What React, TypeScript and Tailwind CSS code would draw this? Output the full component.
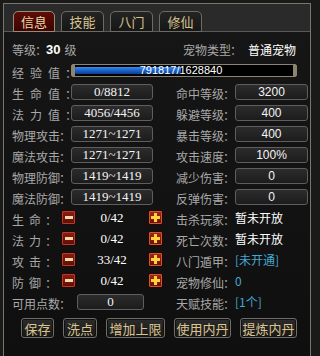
import React from 'react';

const CJK = "font-['Noto_Sans_CJK_SC','Noto_Sans',sans-serif]";

type Spread = 'none' | 'two' | 'three';

const leftRows: { label: string; spread: Spread; value: string }[] = [
  { label: '生命值', spread: 'three', value: '0/8812' },
  { label: '法力值', spread: 'three', value: '4056/4456' },
  { label: '物理攻击', spread: 'none', value: '1271~1271' },
  { label: '魔法攻击', spread: 'none', value: '1271~1271' },
  { label: '物理防御', spread: 'none', value: '1419~1419' },
  { label: '魔法防御', spread: 'none', value: '1419~1419' },
];

const points = [
  { label: '生命', value: '0/42' },
  { label: '法力', value: '0/42' },
  { label: '攻击', value: '33/42' },
  { label: '防御', value: '0/42' },
];

type RightRow = { label: string; value: string; kind: 'box' | 'white' | 'cyan' };

const rightRows: RightRow[] = [
  { label: '命中等级', value: '3200', kind: 'box' },
  { label: '躲避等级', value: '400', kind: 'box' },
  { label: '暴击等级', value: '400', kind: 'box' },
  { label: '攻击速度', value: '100%', kind: 'box' },
  { label: '减少伤害', value: '0', kind: 'box' },
  { label: '反弹伤害', value: '0', kind: 'box' },
  { label: '击杀玩家', value: '暂未开放', kind: 'white' },
  { label: '死亡次数', value: '暂未开放', kind: 'white' },
  { label: '八门遁甲', value: '[未开通]', kind: 'cyan' },
  { label: '宠物修仙', value: '0', kind: 'cyan' },
  { label: '天赋技能', value: '[1个]', kind: 'cyan' },
];

const tabs = ['信息', '技能', '八门', '修仙'];
const buttons = [
  { text: '保存', w: 'w-[33px]' },
  { text: '洗点', w: 'w-[34px]' },
  { text: '增加上限', w: 'w-[59px]' },
  { text: '使用内丹', w: 'w-[57px]' },
  { text: '提炼内丹', w: 'w-[57px]' },
];

function Label({ text, spread = 'none' }: { text: string; spread?: Spread }) {
  const gap = spread === 'three' ? 'gap-[6px]' : spread === 'two' ? 'gap-[5px]' : 'gap-0';
  return (
    <span className={`inline-flex items-center whitespace-nowrap ${gap} text-[12px] text-[#a8a8a8] leading-none`}>
      {text.split('').map((c, i) => (
        <span key={i}>{c}</span>
      ))}
      <span className="-ml-px">：</span>
    </span>
  );
}

function ValueBox({ value, serif, width }: { value: string; serif?: boolean; width: string }) {
  return (
    <div
      className={`${width} h-[16px] rounded-[3px] border border-[#5e5e5e] bg-gradient-to-b from-[#2c2c2c] to-[#1c1c1c] flex items-center justify-center text-[#f4f4f4] leading-none ${
        serif ? "font-['Liberation_Serif',serif] text-[13px]" : "font-['Liberation_Sans',sans-serif] text-[12px]"
      }`}
    >
      {value}
    </div>
  );
}

function MinusBtn() {
  return (
    <div className="w-[15px] h-[15px] rounded-[2px] border border-[#2a0504] bg-gradient-to-b from-[#8e1c14] to-[#5e0d08] flex items-center justify-center shadow-[inset_0_0_0_1px_#b0402c]">
      <div className="w-[8px] h-[3px] bg-[#f3d8a8]" />
    </div>
  );
}

function PlusBtn() {
  return (
    <div className="relative w-[15px] h-[15px] rounded-[2px] border border-[#2a0504] bg-gradient-to-b from-[#a8261a] to-[#6a1008] flex items-center justify-center shadow-[inset_0_0_0_1px_#c85a30]">
      <div className="absolute w-[9px] h-[3px] bg-[#ffd23a]" />
      <div className="absolute w-[3px] h-[9px] bg-[#ffd23a]" />
    </div>
  );
}

export default function App() {
  const expCur = 791817;
  const expMax = 1628840;
  const pct = (expCur / expMax) * 100;

  return (
    <div className={`w-[320px] h-[356px] bg-[#1a1a1a] pt-[3px] pl-[3px] pr-[9px] overflow-hidden ${CJK}`}>
      <div className="h-full border-t border-l border-r border-[#77776c] flex flex-col bg-gradient-to-b from-[#161616] to-[#0f0f0f]">
        {/* Tabs header */}
        <div className="h-[28px] bg-[#2a2a2a] border-b border-[#5a5a52] flex items-end pl-[9px] gap-[6px]">
          {tabs.map((t, i) => (
            <div
              key={t}
              className={`h-[21px] -mb-px rounded-t-[5px] border flex items-center justify-center text-[13px] leading-none ${
                i === 0
                  ? 'w-[42px] border-[#9a8a78] bg-gradient-to-b from-[#5e0c08] to-[#3a0604] text-[#ecd8a4]'
                  : 'w-[43px] border-[#6c6c64] bg-gradient-to-b from-[#242424] to-[#161616] text-[#d8c490]'
              }`}
            >
              {t}
            </div>
          ))}
        </div>

        {/* Content */}
        <div className="pl-[8px] pt-[7px] flex flex-col">
          {/* Level row */}
          <div className="h-[21px] flex items-center">
            <div className="w-[171px] flex items-center">
              <Label text="等级" />
              <span className="-ml-[1px] text-[13px] font-bold text-white font-['Liberation_Sans',sans-serif] leading-none">30</span>
              <span className="ml-[4px] text-[12px] text-[#a8a8a8] leading-none">级</span>
            </div>
            <Label text="宠物类型" />
            <span className="ml-[6px] text-[12px] text-white leading-none">普通宠物</span>
          </div>

          {/* Exp row */}
          <div className="h-[21px] flex items-center">
            <div className="w-[59px] shrink-0">
              <Label text="经验值" spread="three" />
            </div>
            <div className="relative w-[226px] h-[13px] rounded-[2px] border border-[#8c8470] bg-black px-[3px] py-[2px]">
              <div className="h-full rounded-[1px] bg-gradient-to-b from-[#3a8cf0] via-[#1a62c8] to-[#0c3e92]" style={{ width: `${pct}%` }} />
              <div className="absolute left-0 top-0 bottom-0 w-[3px] bg-[#8c8470]" />
              <div className="absolute right-0 top-0 bottom-0 w-[3px] bg-[#8c8470]" />
              <div className="absolute inset-0 flex items-center justify-center pr-[6px] text-[11px] text-white font-['Liberation_Sans',sans-serif] leading-none">
                {expCur}/{expMax}
              </div>
            </div>
          </div>

          {/* Two columns */}
          <div className="flex">
            <div className="w-[164px] flex flex-col">
              {leftRows.map((r) => (
                <div key={r.label} className="h-[21px] flex items-center">
                  <div className="w-[59px]">
                    <Label text={r.label} spread={r.spread} />
                  </div>
                  <ValueBox value={r.value} serif width="w-[82px]" />
                </div>
              ))}
              {points.map((p) => (
                <div key={p.label} className="h-[21px] flex items-center">
                  <div className="w-[49px]">
                    <Label text={p.label} spread="two" />
                  </div>
                  <MinusBtn />
                  <div className="w-[72px] text-center text-[13px] text-white font-['Liberation_Serif',serif] leading-none">
                    {p.value}
                  </div>
                  <PlusBtn />
                </div>
              ))}
              <div className="h-[21px] flex items-center">
                <div className="w-[65px]">
                  <Label text="可用点数" />
                </div>
                <ValueBox value="0" serif width="w-[67px]" />
              </div>
            </div>

            <div className="flex flex-col">
              {rightRows.map((r) => (
                <div key={r.label} className="h-[21px] flex items-center">
                  <div className="w-[59px]">
                    <Label text={r.label} />
                  </div>
                  {r.kind === 'box' ? (
                    <ValueBox value={r.value} width="w-[73px]" />
                  ) : (
                    <span
                      className={`text-[12px] leading-none ${
                        r.kind === 'white' ? 'text-white' : 'text-[#46a8d0]'
                      }`}
                    >
                      {r.value}
                    </span>
                  )}
                </div>
              ))}
            </div>
          </div>

          {/* Buttons */}
          <div className="flex pl-[9px] mt-[6px] gap-[9px]">
            {buttons.map((b) => (
              <div
                key={b.text}
                className={`${b.w} h-[20px] rounded-[3px] border border-[#6e6e66] bg-gradient-to-b from-[#2c2c2c] to-[#181818] shadow-[inset_0_0_0_1px_#111] flex items-center justify-center text-[13px] text-[#dcc490] leading-none`}
              >
                {b.text}
              </div>
            ))}
          </div>
        </div>
      </div>
    </div>
  );
}
